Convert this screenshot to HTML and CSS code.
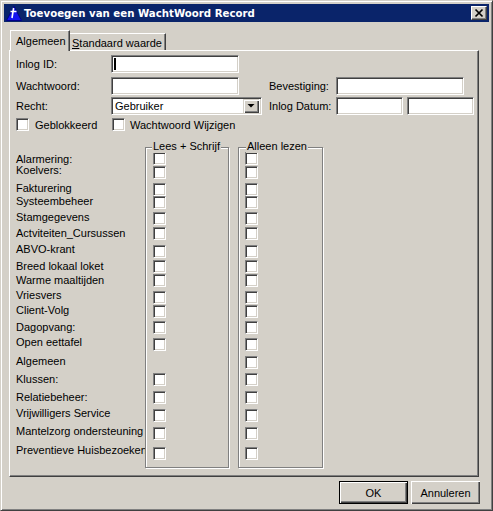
FILE: index.html
```html
<!DOCTYPE html>
<html>
<head>
<meta charset="utf-8">
<title>Toevoegen van een WachtWoord Record</title>
<link rel="stylesheet" href="styles.css">
</head>
<body>
<div class="window">
  <div class="titlebar">
    <svg class="appicon" width="16" height="15" viewBox="0 0 16 15">
      <polygon points="8,0.5 15.5,14.5 0.5,14.5" fill="#1414f0" stroke="#00008a" stroke-width="1"/>
      <path d="M7.6 2 L6 12 M4.5 5.5 L10.5 5.5" stroke="#fff" stroke-width="1.6" fill="none"/>
    </svg>
    <span class="title">Toevoegen van een WachtWoord Record</span>
    <div class="closebtn">
      <svg width="14" height="12" viewBox="0 0 14 12">
        <path d="M3.5 2.5 L10.5 9.5 M10.5 2.5 L3.5 9.5" stroke="#000" stroke-width="1.7" fill="none"/>
      </svg>
    </div>
  </div>

  <div class="client">
    <div class="tabs">
      <div class="tab active">Algemeen</div>
      <div class="tab inactive"><u>S</u>tandaard waarde</div>
    </div>

    <div class="panel">
      <div class="frow r1">
        <span class="lbl">Inlog ID:</span>
        <div class="field w128"><span class="caret"></span></div>
      </div>
      <div class="frow r2">
        <span class="lbl">Wachtwoord:</span>
        <div class="field w128"></div>
        <span class="lbl2 gap30">Bevestiging:</span>
        <div class="field w128"></div>
      </div>
      <div class="frow r3">
        <span class="lbl">Recht:</span>
        <div class="field select">
          <span class="seltext">Gebruiker</span>
          <span class="dropbtn">
            <svg width="12" height="10" viewBox="0 0 12 10"><polygon points="2.5,3 9.5,3 6,6.5" fill="#000"/></svg>
          </span>
        </div>
        <span class="lbl2 gap7">Inlog Datum:</span>
        <div class="field w67"></div>
        <div class="field w67 gap4"></div>
      </div>
      <div class="frow r4">
        <div class="cgroup first">
          <span class="chk"></span><span class="clabel">Geblokkeerd</span>
        </div>
        <div class="cgroup">
          <span class="chk"></span><span class="clabel second">Wachtwoord Wijzigen</span>
        </div>
      </div>

      <div class="matrix">
        <div class="labels">
          <div class="lc h11">Alarmering:</div>
          <div class="lc h18">Koelvers:</div>
          <div class="lc h13">Fakturering</div>
          <div class="lc h16">Systeembeheer</div>
          <div class="lc h16">Stamgegevens</div>
          <div class="lc h16">Actviteiten_Cursussen</div>
          <div class="lc h17">ABVO-krant</div>
          <div class="lc h14">Breed lokaal loket</div>
          <div class="lc h15">Warme maaltijden</div>
          <div class="lc h15">Vriesvers</div>
          <div class="lc h17">Client-Volg</div>
          <div class="lc h15">Dagopvang:</div>
          <div class="lc h19">Open eettafel</div>
          <div class="lc h18">Algemeen</div>
          <div class="lc h18">Klussen:</div>
          <div class="lc h16">Relatiebeheer:</div>
          <div class="lc h18">Vrijwilligers Service</div>
          <div class="lc h19">Mantelzorg ondersteuning</div>
          <div class="lc h16">Preventieve Huisbezoeken</div>
        </div>

        <div class="group g1">
          <span class="legend">Lees + Schrijf</span>
          <div class="cc h14"><span class="chk"></span></div>
          <div class="cc h17"><span class="chk"></span></div>
          <div class="cc h13"><span class="chk"></span></div>
          <div class="cc h16"><span class="chk"></span></div>
          <div class="cc h15"><span class="chk"></span></div>
          <div class="cc h18"><span class="chk"></span></div>
          <div class="cc h15"><span class="chk"></span></div>
          <div class="cc h14"><span class="chk"></span></div>
          <div class="cc h17"><span class="chk"></span></div>
          <div class="cc h14"><span class="chk"></span></div>
          <div class="cc h16"><span class="chk"></span></div>
          <div class="cc h17"><span class="chk"></span></div>
          <div class="cc h18"><span class="chk"></span></div>
          <div class="cc h17"></div>
          <div class="cc h18"><span class="chk"></span></div>
          <div class="cc h18"><span class="chk"></span></div>
          <div class="cc h18"><span class="chk"></span></div>
          <div class="cc h20"><span class="chk"></span></div>
          <div class="cc h16"><span class="chk"></span></div>
        </div>

        <div class="group g2">
          <span class="legend">Alleen lezen</span>
          <div class="cc h14"><span class="chk"></span></div>
          <div class="cc h17"><span class="chk"></span></div>
          <div class="cc h13"><span class="chk"></span></div>
          <div class="cc h16"><span class="chk"></span></div>
          <div class="cc h15"><span class="chk"></span></div>
          <div class="cc h18"><span class="chk"></span></div>
          <div class="cc h15"><span class="chk"></span></div>
          <div class="cc h14"><span class="chk"></span></div>
          <div class="cc h17"><span class="chk"></span></div>
          <div class="cc h14"><span class="chk"></span></div>
          <div class="cc h16"><span class="chk"></span></div>
          <div class="cc h17"><span class="chk"></span></div>
          <div class="cc h18"><span class="chk"></span></div>
          <div class="cc h17"><span class="chk"></span></div>
          <div class="cc h18"><span class="chk"></span></div>
          <div class="cc h18"><span class="chk"></span></div>
          <div class="cc h18"><span class="chk"></span></div>
          <div class="cc h20"><span class="chk"></span></div>
          <div class="cc h16"><span class="chk"></span></div>
        </div>
      </div>
    </div>

    <div class="buttons">
      <div class="btn default">OK</div>
      <div class="btn">Annuleren</div>
    </div>
  </div>
</div>
</body>
</html>
```

FILE: styles.css
```css
html, body {
  margin: 0;
  padding: 0;
  background: #d4d0c8;
}
body {
  font-family: "Liberation Sans", Arial, sans-serif;
  font-size: 11px;
  color: #000;
}

.window {
  width: 493px;
  height: 511px;
  box-sizing: border-box;
  background: #d4d0c8;
  border: 1px solid;
  border-color: #d4d0c8 #404040 #404040 #d4d0c8;
  box-shadow: inset 1px 1px 0 #fff, inset -1px -1px 0 #808080;
  padding: 3px;
  display: flex;
  flex-direction: column;
}

/* title bar */
.titlebar {
  height: 18px;
  background: #0a246a;
  display: flex;
  align-items: center;
  color: #fff;
  flex: none;
}
.appicon {
  margin-left: 2px;
  flex: none;
}
.title {
  margin-left: 2px;
  font-family: "DejaVu Sans", Verdana, sans-serif;
  font-weight: bold;
  font-size: 10.2px;
  white-space: nowrap;
}
.closebtn {
  margin-left: auto;
  margin-right: 2px;
  width: 16px;
  height: 14px;
  box-sizing: border-box;
  background: #d4d0c8;
  border: 1px solid;
  border-color: #fff #404040 #404040 #fff;
  box-shadow: inset -1px -1px 0 #808080;
  display: flex;
  align-items: center;
  justify-content: center;
}
.closebtn svg { display: block; }

/* client area */
.client {
  padding-top: 8px;
  display: flex;
  flex-direction: column;
}

.tabs {
  display: flex;
  align-items: flex-end;
  height: 20px;
  margin-left: 6px;
}
.tab {
  box-sizing: border-box;
  line-height: 13px;
  white-space: nowrap;
  background: #d4d0c8;
  border-top: 1px solid #fff;
  border-right: 1px solid #404040;
  box-shadow: inset -1px 0 0 #808080;
}
.tab.active {
  width: 60px;
  height: 21px;
  margin-bottom: -1px;
  position: relative;
  z-index: 2;
  border-left: 1px solid #fff;
  padding-top: 4px;
  padding-left: 5px;
}
.tab.inactive {
  width: 96px;
  height: 17px;
  padding-top: 3px;
  padding-left: 2px;
}

.panel {
  position: relative;
  z-index: 1;
  width: 470px;
  height: 427px;
  margin-left: 5px;
  box-sizing: border-box;
  border: 1px solid;
  border-color: #fff #404040 #404040 #fff;
  box-shadow: inset -1px -1px 0 #808080;
  padding: 4px 0 0 6px;
}

.frow {
  display: flex;
  align-items: center;
  height: 18px;
}
.r2 { margin-top: 4px; }
.r3 { margin-top: 2px; }
.r4 { margin-top: 3px; height: 13px; }

.lbl { width: 95px; flex: none; white-space: nowrap; }
.lbl2 { width: 67px; flex: none; white-space: nowrap; }
.gap30 { margin-left: 30px; }
.gap7 { margin-left: 7px; }
.gap4 { margin-left: 4px; }

.field {
  height: 18px;
  box-sizing: border-box;
  background: #fff;
  border: 1px solid;
  border-color: #808080 #fff #fff #808080;
  box-shadow: inset 1px 1px 0 #404040, inset -1px -1px 0 #d4d0c8;
  flex: none;
  position: relative;
}
.w128 { width: 128px; }
.w67 { width: 67px; }

.caret {
  position: absolute;
  left: 2px;
  top: 2px;
  width: 2px;
  height: 12px;
  background: #000;
}

.select {
  width: 151px;
  display: flex;
  align-items: center;
  padding: 2px;
}
.seltext {
  padding-left: 1px;
  line-height: 14px;
}
.dropbtn {
  margin-left: auto;
  width: 16px;
  height: 14px;
  box-sizing: border-box;
  background: #d4d0c8;
  box-shadow: inset 1px 1px 0 #d4d0c8, inset 2px 2px 0 #fff, inset -1px -1px 0 #404040, inset -2px -2px 0 #808080;
  display: flex;
  align-items: center;
  justify-content: center;
}
.dropbtn svg { display: block; }

.cgroup {
  display: flex;
  align-items: center;
}
.cgroup.first { width: 96px; }
.clabel { margin-left: 6px; white-space: nowrap; }
.clabel.second { margin-left: 5px; }

.chk {
  display: block;
  width: 13px;
  height: 13px;
  box-sizing: border-box;
  background: #fff;
  border: 1px solid;
  border-color: #808080 #fff #fff #808080;
  box-shadow: inset 1px 1px 0 #404040, inset -1px -1px 0 #d4d0c8;
  flex: none;
}

/* permission matrix */
.matrix {
  display: flex;
  margin-top: 16px;
}
.labels {
  width: 129px;
  padding-top: 6px;
  flex: none;
}
.lc {
  line-height: 13px;
  white-space: nowrap;
}
.group {
  position: relative;
  height: 321px;
  box-sizing: border-box;
  border: 1px solid #808080;
  box-shadow: 1px 1px 0 #fff, inset 1px 1px 0 #fff;
  padding-top: 4px;
  flex: none;
}
.g1 { width: 84px; padding-left: 7px; }
.g2 { width: 85px; padding-left: 6px; margin-left: 9px; }
.legend {
  position: absolute;
  top: -8px;
  line-height: 13px;
  padding: 0 1px;
  background: #d4d0c8;
  white-space: nowrap;
}
.g1 .legend { left: 6px; }
.g2 .legend { left: 7px; }

.h11 { height: 11px; }
.h13 { height: 13px; }
.h14 { height: 14px; }
.h15 { height: 15px; }
.h16 { height: 16px; }
.h17 { height: 17px; }
.h18 { height: 18px; }
.h19 { height: 19px; }
.h20 { height: 20px; }

/* buttons */
.buttons {
  display: flex;
  justify-content: flex-end;
  gap: 3px;
  margin-top: 4px;
  margin-right: 9px;
}
.btn {
  width: 69px;
  height: 23px;
  box-sizing: border-box;
  display: flex;
  align-items: center;
  justify-content: center;
  background: #d4d0c8;
  box-shadow: inset 1px 1px 0 #fff, inset -1px -1px 0 #404040, inset -2px -2px 0 #808080;
}
.btn.default {
  border: 1px solid #000;
  box-shadow: inset 1px 1px 0 #fff, inset -1px -1px 0 #404040, inset -2px -2px 0 #808080;
}
```
